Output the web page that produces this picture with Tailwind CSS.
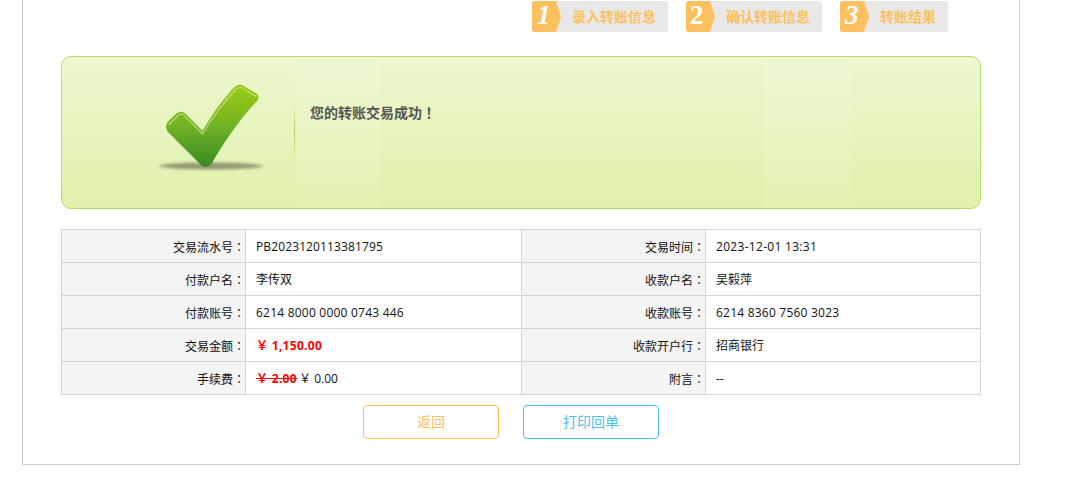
<!DOCTYPE html>
<html lang="zh-CN">
<head>
    <meta charset="UTF-8">
    <title>转账结果</title>
    <script src="https://cdn.jsdelivr.net/npm/@tailwindcss/browser@4"></script>
</head>
<body class="bg-white overflow-hidden font-['Open_Sans','Noto_Sans_CJK_SC',sans-serif] text-xs text-[#333]">
    <div class="ml-[22px] w-[998px] h-[465px] border-x border-b border-[#ccc] px-[38px] pt-px">

        <!--steps-->
        <div class="flex justify-end gap-[18px] pr-[33px]">
            <div class="w-[136px] h-[31px] flex bg-[#e8e8e8] rounded-[3px] overflow-hidden">
                <div class="w-[29px] bg-[#fcc05f] [clip-path:polygon(0_0,24px_0,29px_50%,24px_100%,0_100%)] text-white text-[27px] leading-[29px] italic font-bold font-['Liberation_Serif',serif] pl-[5px]">1</div>
                <div class="ml-[11px] text-sm font-bold leading-[31px] text-[#fcc05f]">录入转账信息</div>
            </div>
            <div class="w-[136px] h-[31px] flex bg-[#e8e8e8] rounded-[3px] overflow-hidden">
                <div class="w-[29px] bg-[#fcc05f] [clip-path:polygon(0_0,24px_0,29px_50%,24px_100%,0_100%)] text-white text-[27px] leading-[29px] font-bold font-['Liberation_Serif',serif] pl-[4px]">2</div>
                <div class="ml-[11px] text-sm font-bold leading-[31px] text-[#fcc05f]">确认转账信息</div>
            </div>
            <div class="w-[108px] h-[31px] flex bg-[#e8e8e8] rounded-[3px] overflow-hidden">
                <div class="w-[29px] bg-[#fcc05f] [clip-path:polygon(0_0,24px_0,29px_50%,24px_100%,0_100%)] text-white text-[27px] leading-[29px] italic font-bold font-['Liberation_Serif',serif] pl-[5px]">3</div>
                <div class="ml-[11px] text-sm font-bold leading-[31px] text-[#fcc05f]">转账结果</div>
            </div>
        </div>

        <!--success panel-->
        <div class="mt-[24px] w-[920px] h-[153px] flex rounded-[10px] border border-[#b5dc6e] bg-[linear-gradient(90deg,transparent_233px,#ffffff14_234px,#ffffff14_318px,transparent_320px,transparent_701px,#ffffff14_702px,#ffffff14_788px,transparent_790px),linear-gradient(180deg,#edf8d0,#dff1ab)]">
            <div class="w-[233px] shrink-0">
                <svg width="233" height="151" viewBox="62 57 233 151">
                    <defs>
                        <linearGradient id="tick" x1="0" y1="0" x2="0" y2="1">
                            <stop offset="0" stop-color="#9ccd12"/>
                            <stop offset="0.55" stop-color="#6cb024"/>
                            <stop offset="1" stop-color="#368a22"/>
                        </linearGradient>
                        <linearGradient id="rule" x1="0" y1="0" x2="0" y2="1">
                            <stop offset="0" stop-color="#a6d455" stop-opacity="0"/>
                            <stop offset="0.5" stop-color="#a6d455"/>
                            <stop offset="1" stop-color="#a6d455" stop-opacity="0"/>
                        </linearGradient>
                        <filter id="soft" x="-20%" y="-100%" width="140%" height="300%">
                            <feGaussianBlur stdDeviation="1.4"/>
                        </filter>
                    </defs>
                    <ellipse cx="211" cy="166" rx="52" ry="3.4" fill="#6f7355" opacity="0.7" filter="url(#soft)"/>
                    <path d="M168 121.5 L176.5 113.5 Q181 110 185.5 113.5 L202.5 131 C212 114 224 98 234.5 87 Q239 83.5 243 85.5 L256.5 93.5 Q260 97 257.5 100.5 C240 119 224 142 211.5 164 Q207 169.5 201 165 L167.5 131.5 Q164.5 126 168 121.5 Z" fill="url(#tick)"/>
                    <path d="M168.5 125 L178 115.5 Q181 113 184.5 115.5 L202.5 134 C212 118 225 101 235.5 89.5 Q239 86.5 242.5 88 L256.5 96.5" fill="none" stroke="#c3e08f" stroke-width="1.2" opacity="0.85"/>
                    <rect x="294" y="98" width="1" height="68" fill="url(#rule)"/>
                </svg>
            </div>
            <p class="ml-[15px] mt-[46px] text-sm font-bold leading-[18px] text-[#555]">您的转账交易成功<span lang="zh-TW" class="font-['Noto_Sans_CJK_TC']">！</span></p>
        </div>

        <!--details-->
        <table class="mt-[20px] w-[919px] table-fixed border-collapse border border-[#d5d5d5] text-[#111]">
            <colgroup>
                <col class="w-[184px]">
                <col class="w-[276px]">
                <col class="w-[184px]">
                <col class="w-[275px]">
            </colgroup>
            <tbody>
                <tr class="h-[33px]">
                    <th class="border border-[#d5d5d5] bg-[#f4f4f4] font-normal text-right pt-[2px]">交易流水号<span lang="zh-TW" class="font-['Noto_Sans_CJK_TC']">：</span></th>
                    <td class="border border-[#d5d5d5] pl-[10px] pt-[2px] tracking-[0.12px]">PB2023120113381795</td>
                    <th class="border border-[#d5d5d5] bg-[#f4f4f4] font-normal text-right pt-[2px]">交易时间<span lang="zh-TW" class="font-['Noto_Sans_CJK_TC']">：</span></th>
                    <td class="border border-[#d5d5d5] pl-[10px] pt-[2px] tracking-[0.3px]">2023-12-01 13:31</td>
                </tr>
                <tr class="h-[33px]">
                    <th class="border border-[#d5d5d5] bg-[#f4f4f4] font-normal text-right pt-[2px]">付款户名<span lang="zh-TW" class="font-['Noto_Sans_CJK_TC']">：</span></th>
                    <td class="border border-[#d5d5d5] pl-[10px] pt-[2px]">李传双</td>
                    <th class="border border-[#d5d5d5] bg-[#f4f4f4] font-normal text-right pt-[2px]">收款户名<span lang="zh-TW" class="font-['Noto_Sans_CJK_TC']">：</span></th>
                    <td class="border border-[#d5d5d5] pl-[10px] pt-[2px]">吴毅萍</td>
                </tr>
                <tr class="h-[33px]">
                    <th class="border border-[#d5d5d5] bg-[#f4f4f4] font-normal text-right pt-[2px]">付款账号<span lang="zh-TW" class="font-['Noto_Sans_CJK_TC']">：</span></th>
                    <td class="border border-[#d5d5d5] pl-[10px] pt-[2px] tracking-[0.22px]">6214 8000 0000 0743 446</td>
                    <th class="border border-[#d5d5d5] bg-[#f4f4f4] font-normal text-right pt-[2px]">收款账号<span lang="zh-TW" class="font-['Noto_Sans_CJK_TC']">：</span></th>
                    <td class="border border-[#d5d5d5] pl-[10px] pt-[2px] tracking-[0.22px]">6214 8360 7560 3023</td>
                </tr>
                <tr class="h-[33px]">
                    <th class="border border-[#d5d5d5] bg-[#f4f4f4] font-normal text-right pt-[2px]">交易金额<span lang="zh-TW" class="font-['Noto_Sans_CJK_TC']">：</span></th>
                    <td class="border border-[#d5d5d5] pl-[10px] pt-[2px] font-bold text-[#f00] tracking-[0.3px]">￥ 1,150.00</td>
                    <th class="border border-[#d5d5d5] bg-[#f4f4f4] font-normal text-right pt-[2px]">收款开户行<span lang="zh-TW" class="font-['Noto_Sans_CJK_TC']">：</span></th>
                    <td class="border border-[#d5d5d5] pl-[10px] pt-[2px]">招商银行</td>
                </tr>
                <tr class="h-[33px]">
                    <th class="border border-[#d5d5d5] bg-[#f4f4f4] font-normal text-right pt-[2px]">手续费<span lang="zh-TW" class="font-['Noto_Sans_CJK_TC']">：</span></th>
                    <td class="border border-[#d5d5d5] pl-[10px] pt-[2px]"><span class="font-bold text-[#f00] line-through tracking-[0.3px]">￥ 2.00</span><span class="ml-[-1px]"> ￥ 0.00</span></td>
                    <th class="border border-[#d5d5d5] bg-[#f4f4f4] font-normal text-right pt-[2px]">附言<span lang="zh-TW" class="font-['Noto_Sans_CJK_TC']">：</span></th>
                    <td class="border border-[#d5d5d5] pl-[10px] pt-[2px]">--</td>
                </tr>
            </tbody>
        </table>

        <!--buttons-->
        <div class="mt-[10px] ml-[302px] flex gap-[24px]">
            <button class="w-[136px] h-[34px] rounded-[4px] border border-[#fcc05f] text-sm text-[#fcc05f] bg-white">返回</button>
            <button class="w-[136px] h-[34px] rounded-[4px] border border-[#4fc0ee] text-sm text-[#4fc0ee] bg-white">打印回单</button>
        </div>
    </div>
</body>
</html>
